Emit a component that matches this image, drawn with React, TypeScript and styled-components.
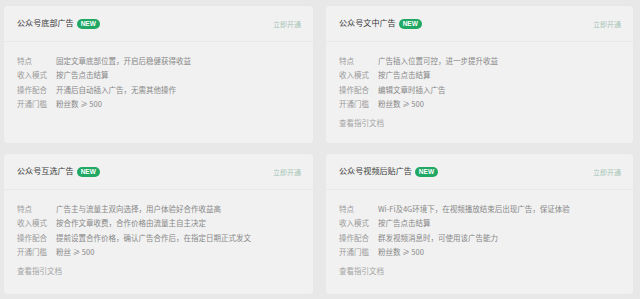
import React from "react";
import styled, { createGlobalStyle } from "styled-components";

const Global = createGlobalStyle`
  html, body { margin: 0; padding: 0; background: #e8e8e8; }
  body { font-family: "Noto Sans CJK SC", "Noto Sans", sans-serif; }
`;

const Page = styled.div`
  width: 640px;
  height: 299px;
  box-sizing: border-box;
  padding: 6px 7px 5px 4px;
  display: grid;
  grid-template-columns: 309px 307px;
  grid-template-rows: 137px 140px;
  column-gap: 13px;
  row-gap: 11px;
  background: #e8e8e8;
`;

const Card = styled.div`
  background: #f1f1f1;
  border-radius: 3px;
  box-shadow: 0 0 1px rgba(0, 0, 0, 0.04);
  display: flex;
  flex-direction: column;
`;

const Header = styled.div`
  height: 35px;
  padding: 0 12px 0 13px;
  display: flex;
  align-items: center;
  justify-content: space-between;
  border-bottom: 1px solid #e9e9e9;
`;

const TitleWrap = styled.div`
  display: flex;
  align-items: center;
  gap: 3px;
`;

const Title = styled.span`
  font-size: 8.1px;
  color: #3a3a3a;
  line-height: 1;
`;

const Badge = styled.span`
  background: #22a865;
  color: #ffffff;
  font-family: "Liberation Sans", Arial, sans-serif;
  font-weight: bold;
  font-size: 6.5px;
  height: 10px;
  padding: 0 4px;
  border-radius: 6px;
  display: inline-flex;
  align-items: center;
`;

const Action = styled.span`
  font-size: 7px;
  color: #a9c6b8;
`;

const Body = styled.div`
  padding: 12px 12px 0 13px;
  display: flex;
  flex-direction: column;
`;

const Row = styled.div`
  display: flex;
  height: 14.3px;
  align-items: center;
  font-size: 7.5px;
  line-height: 14px;
`;

const Label = styled.span`
  width: 39px;
  flex: none;
  color: #9a9a9a;
`;

const Value = styled.span`
  color: #888888;
  white-space: nowrap;
`;

const Link = styled.div`
  margin-top: 5px;
  font-size: 7.5px;
  line-height: 14px;
  color: #a4a4a4;
`;

type Info = {
  title: string;
  rows: string[];
  link: boolean;
};

const labels = ["特点", "收入模式", "操作配合", "开通门槛"];

const cards: Info[] = [
  {
    title: "公众号底部广告",
    rows: ["固定文章底部位置，开启后稳健获得收益", "按广告点击结算", "开通后自动插入广告，无需其他操作", "粉丝数 ≥ 500"],
    link: false,
  },
  {
    title: "公众号文中广告",
    rows: ["广告插入位置可控，进一步提升收益", "按广告点击结算", "编辑文章时插入广告", "粉丝数 ≥ 500"],
    link: true,
  },
  {
    title: "公众号互选广告",
    rows: [
      "广告主与流量主双向选择，用户体验好合作收益高",
      "按合作文章收费，合作价格由流量主自主决定",
      "提前设置合作价格，确认广告合作后，在指定日期正式发文",
      "粉丝 ≥ 500",
    ],
    link: true,
  },
  {
    title: "公众号视频后贴广告",
    rows: [
      "Wi-Fi及4G环境下，在视频播放结束后出现广告，保证体验",
      "按广告点击结算",
      "群发视频消息时，可使用该广告能力",
      "粉丝数 ≥ 500",
    ],
    link: true,
  },
];

export default function App() {
  return (
    <>
      <Global />
      <Page>
        {cards.map((c) => (
          <Card key={c.title}>
            <Header>
              <TitleWrap>
                <Title>{c.title}</Title>
                <Badge>NEW</Badge>
              </TitleWrap>
              <Action>立即开通</Action>
            </Header>
            <Body>
              {c.rows.map((r, i) => (
                <Row key={i}>
                  <Label>{labels[i]}</Label>
                  <Value>{r}</Value>
                </Row>
              ))}
              {c.link && <Link>查看指引文档</Link>}
            </Body>
          </Card>
        ))}
      </Page>
    </>
  );
}
